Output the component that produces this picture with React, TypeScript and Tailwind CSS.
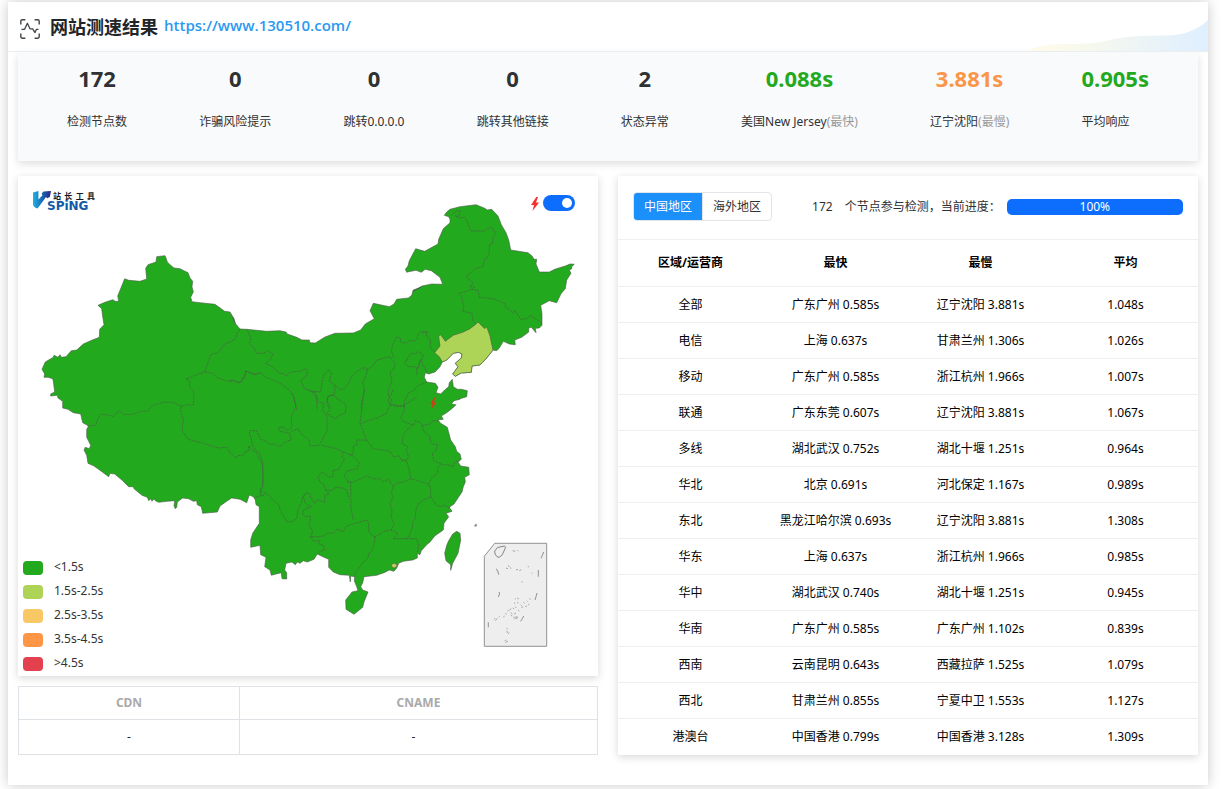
import React, { useState } from "react";

type Stat = { value: string; label: string; note?: string; color: string };

const stats: Stat[] = [
  { value: "172", label: "检测节点数", color: "text-[#303133]" },
  { value: "0", label: "诈骗风险提示", color: "text-[#303133]" },
  { value: "0", label: "跳转0.0.0.0", color: "text-[#303133]" },
  { value: "0", label: "跳转其他链接", color: "text-[#303133]" },
  { value: "2", label: "状态异常", color: "text-[#303133]" },
  { value: "0.088s", label: "美国New Jersey", note: "(最快)", color: "text-[#23a91d]" },
  { value: "3.881s", label: "辽宁沈阳", note: "(最慢)", color: "text-[#fb9547]" },
  { value: "0.905s", label: "平均响应", color: "text-[#23a91d]" },
];

const rows = [
  ["全部", "广东广州 0.585s", "辽宁沈阳 3.881s", "1.048s"],
  ["电信", "上海 0.637s", "甘肃兰州 1.306s", "1.026s"],
  ["移动", "广东广州 0.585s", "浙江杭州 1.966s", "1.007s"],
  ["联通", "广东东莞 0.607s", "辽宁沈阳 3.881s", "1.067s"],
  ["多线", "湖北武汉 0.752s", "湖北十堰 1.251s", "0.964s"],
  ["华北", "北京 0.691s", "河北保定 1.167s", "0.989s"],
  ["东北", "黑龙江哈尔滨 0.693s", "辽宁沈阳 3.881s", "1.308s"],
  ["华东", "上海 0.637s", "浙江杭州 1.966s", "0.985s"],
  ["华中", "湖北武汉 0.740s", "湖北十堰 1.251s", "0.945s"],
  ["华南", "广东广州 0.585s", "广东广州 1.102s", "0.839s"],
  ["西南", "云南昆明 0.643s", "西藏拉萨 1.525s", "1.079s"],
  ["西北", "甘肃兰州 0.855s", "宁夏中卫 1.553s", "1.127s"],
  ["港澳台", "中国香港 0.799s", "中国香港 3.128s", "1.309s"],
];

const legend = [
  { color: "bg-[#23a91d]", text: "<1.5s" },
  { color: "bg-[#aed457]", text: "1.5s-2.5s" },
  { color: "bg-[#f9c866]", text: "2.5s-3.5s" },
  { color: "bg-[#fe9645]", text: "3.5s-4.5s" },
  { color: "bg-[#e2414d]", text: ">4.5s" },
];

/* Each map tile has its own origin and is drawn at three units per map unit. */
function tile(ox: number, oy: number, pts: string): string {
  return pts
    .split(" ")
    .map((p) => {
      const [x, y] = p.split(",").map(Number);
      return `${(ox + x / 3).toFixed(1)},${(oy + y / 3).toFixed(1)}`;
    })
    .join(" ");
}
const nw = (p: string) => tile(30, 240, p);
const north = (p: string) => tile(230, 190, p);
const ne = (p: string) => tile(390, 190, p);
const sw = (p: string) => tile(60, 390, p);
const se = (p: string) => tile(230, 390, p);
const sea = (p: string) => tile(460, 510, p);

const outline = [
  nw("36,388 46,366 70,352 72,346 84,352 90,344 94,352 108,350 124,332 140,330 160,312 185,301 208,292 209,268 222,254 218,230 215,206 204,196 225,187 248,179 256,184 266,184 263,168 284,116 296,121 330,124 350,117 347,85 354,74 378,66 380,50 405,47 408,54 412,66 420,74 432,84 450,86 462,92 474,98 480,114 488,124 486,140 490,156 482,172 486,185 510,188 555,193 584,214 600,216 612,236 616,250"),
  north("8,382 14,398 30,417 50,418 110,424 150,422 168,426 172,432 200,442 216,450 238,450 240,458 256,459 285,441 315,430 370,429 392,420 406,402 433,386 420,362 430,340 478,350 492,342 500,328 535,324 545,316 550,300 574,292"),
  ne("68,304 96,288 125,282 158,283 150,262 124,242 106,238 94,247 78,241 56,245 50,247 46,238 54,228 58,212 77,176 104,184 126,172 144,162 146,148 160,116 180,98 180,88 176,80 163,76 170,66 180,58 210,50 258,44 284,55 292,60 305,58 324,78 334,104 348,128 356,150 362,180 400,186 414,188 426,198 432,208 440,208 438,222 448,246 478,246 494,238 526,228 540,222 553,223 545,230 545,236 538,240 543,250 530,270 526,296 514,310 500,338 478,332 452,346 456,372 456,406 448,414 436,415 438,428 424,412 416,414 416,426 395,442 374,450 376,464 358,462 340,454 328,474 320,482 309,480 290,504 270,525 246,528 244,547 214,549 196,559 188,552 204,530 196,520 214,504 216,492 206,487 190,490 170,510 157,516 150,530 135,546 116,552 106,548 103,562 110,576 136,580 144,592 138,608 152,612 164,600 176,590 178,578 187,568 190,590 202,598 214,598 232,602 230,620 210,626"),
  se("690,28 672,32 664,42 678,44 668,54 650,68 634,78 640,88 624,90 632,100 652,112 662,150 676,170 680,184 690,192 694,208 684,216 692,228 716,232 718,254 704,262 706,276 700,290 696,306 688,318 672,342 658,352 666,364 648,370 656,380 642,400 640,420 614,438 600,456 590,464 574,482 570,494 562,490 562,504 548,510 520,514 506,520 500,534 492,544 478,540 462,548 440,556 402,560 398,578 392,590 398,600 414,606 402,636 398,652 372,673 348,658 347,630 366,606 384,602 380,590 373,572 374,560 362,558 361,576 358,556 330,554 310,546 296,532 296,508 282,502 262,492 252,508 232,516 220,512 210,520 202,516 196,524 186,516 168,520 164,540 170,548 170,567 156,566 154,548 138,552 124,556 120,540 104,530 108,502 92,494 90,466 62,472 62,450 68,430 88,400 88,350 78,344 76,330 70,320"),
  sw("568,315 560,338 540,328 515,324 500,334 480,348 472,366 428,370 424,350 412,344 410,332 400,334 386,326 368,324 352,336 350,352 346,356 342,348 344,332 322,334 296,337 286,332 282,326 276,334 272,326 266,332 262,322 246,316 222,296 220,290 206,290 188,272 164,252 150,250 146,260 124,244 102,228 84,220 80,196 72,180 76,172 88,176 92,166 80,142 80,118 86,108 68,98 62,72"),
  nw("130,518 114,508 98,504 98,484 84,474 82,466 62,468 62,462 74,456 70,424 68,416 54,412 42,412 44,402"),
].join(" ");

const liaoning = ne("256,404 264,396 276,408 284,416 290,410 300,438 309,480 290,504 270,525 246,528 244,547 214,549 196,559 188,552 204,530 196,520 214,504 216,492 206,487 190,490 170,510 157,516 148,500 134,488 150,468 146,440 152,434 166,454 190,436 220,426 240,416");
const taiwan = se("690,430 680,424 668,432 656,452 650,466 644,490 648,512 662,524 662,541 668,520 684,490 692,450");

const borders = [
  nw("629,268 618,285 620,292 604,304 584,312 564,338 542,344 524,396 500,404 468,417 480,425 478,440 492,456 490,496 472,494 462,498 452,498"),
  nw("172,558 196,556 206,532 214,522 250,529 268,513 284,524 310,523 334,513 352,514 366,497 400,487 428,487 452,498"),
  sw("364,50 362,64 370,90 366,120 384,148 430,160 460,170 480,174 500,172 512,190 528,204 534,196 550,198 552,188 564,184 570,165"),
  sw("564,170 590,190 600,212 606,215 610,250 608,290 600,305 606,316 586,322"),
  north("50,418 64,445 58,460 72,474 80,490 100,490 114,482 128,492 122,508 106,520 130,532 148,550 158,550 168,558 180,546 210,544 226,536 234,546 228,560 212,570 222,594 244,604 258,620 262,660"),
  nw("524,396 548,400 560,412 572,416 590,424 608,420 630,428 636,416 644,412 648,392 662,400 676,404 690,400"),
  north("0,574 12,572 24,580 38,572 48,544 74,552 92,548 108,562 124,568 150,580 178,600 192,622 200,660"),
  se("188,10 198,50 184,80 186,110 174,122 162,112 146,112 150,124 180,130 184,150 170,154 150,170 134,162 120,164 106,152 92,148 80,122 60,122 58,130 64,146 66,165"),
  north("244,604 272,606 276,576 282,554 296,538 304,550 298,575 316,586 312,614 294,618 292,634 304,656"),
  se("235,0 258,10 264,36 282,40 278,60 290,78 292,120 276,152 268,166 240,168 236,150 214,132 204,116 184,124"),
  se("290,40 294,20 308,15 348,45 346,70 330,74 316,86 302,78 290,70 300,60 290,40"),
  north("316,586 330,598 340,598 356,580 362,564 380,544 398,534 410,534 412,545 398,580 404,600 394,640 395,660"),
  se("402,0 396,50 390,100 410,150 380,150 382,164 370,168 370,190 360,198"),
  north("410,540 428,528 440,510 480,500 496,520 490,540 480,545 486,575 474,600 476,620 486,630 480,640"),
  se("490,0 474,30 480,44 470,70 440,84 410,94 394,100"),
  north("492,502 484,484 488,464 500,440 510,444 514,458 530,458 540,450 552,454 562,446 564,434 572,424 596,428"),
  ne("96,430 108,425 110,440 122,450 120,470 134,488"),
  ne("50,510 62,490 76,492 84,484 100,496 94,510 98,524 112,548"),
  ne("50,510 44,520 56,530 72,530 82,536 92,508 86,530 80,540 80,556"),
  ne("110,576 80,590 74,600 56,608 44,632 42,650 0,642"),
  ne("184,76 200,62 212,64 206,78 196,78 210,84 222,82 230,90 242,122 280,124 304,110 318,132 308,142 308,160 298,164 298,190 290,206 284,208 280,228 256,236 228,260 250,280 240,290 254,290 244,300"),
  ne("244,298 264,300 268,322 310,326 324,332 348,342 344,350 358,358 370,370 374,360 392,388 412,386 420,376 452,396"),
  ne("244,298 230,304 206,310 214,318 222,350 218,364 246,370 248,390 256,400"),
  se("480,44 504,50 522,46 540,34 560,20"),
  se("522,46 524,60 512,84 520,94 550,106 556,92 568,96 576,106 600,102 608,92 624,92"),
  se("410,150 430,176 480,184 490,200 508,198 514,210 530,210 536,200 528,180 534,170 516,160 520,136 530,120 550,106"),
  se("576,106 582,124 600,140 602,156 610,162 622,164 618,182 606,190 612,214 640,224 664,226 668,232 674,216 690,212"),
  se("632,224 622,236 622,250 606,262 596,280 602,300 602,320"),
  se("514,210 530,214 538,240 542,266"),
  se("350,276 372,276 400,262 410,258 430,266 450,266 460,276 476,268 490,290 500,280 520,276 542,266 570,274 590,280 600,290"),
  se("276,166 300,172 320,176 340,186 368,196 388,218 382,236 350,244 342,258 362,280 362,320"),
  se("340,186 336,200 344,206 326,238 308,242 310,260 300,262 276,246 264,262 270,276 282,284 286,300"),
  se("286,300 304,302 318,292 338,294 350,300 354,318 364,330 362,350 370,390"),
  se("286,300 298,312 284,316 284,336 262,330 254,340 242,324 240,312 230,308 220,320 226,340 244,350 220,360 218,374 226,380 240,378 242,390 236,400 248,426 240,440 260,440 282,438 290,430 312,428 320,418 340,424 350,408 370,402 410,390 416,400 416,424 428,438 436,440"),
  se("90,310 100,318 106,306 120,320 134,334 148,346 150,360 170,394 186,396 200,386 204,360 214,338 218,320 230,308"),
  se("490,290 484,310 490,320 480,340 486,360 484,380 492,400 484,420"),
  se("436,440 462,424 484,420 504,430 490,446 526,446 560,446 566,466 562,490"),
  se("602,320 580,330 566,340 558,360 556,384 546,400 548,410 536,440 526,446"),
  se("602,320 620,346 634,350 640,346 660,354"),
  se("436,440 430,470 424,484 416,490 414,504 400,516 390,530 376,548 374,560"),
  se("244,440 250,454 268,452 266,462 280,465 284,480 270,484 262,492"),
  se("66,165 80,184 90,190 98,220 98,290 88,300 100,306"),
];

const islets = [
  "158,122 166,124", "172,121 175,123", "138,174 144,176", "146,166 147,171", "150,173 154,175", "168,180 174,178",
  "178,182 184,179", "184,215 188,217", "204,168 206,172", "214,188 217,191", "165,268 168,266", "172,264 177,267",
  "162,278 166,281", "172,276 175,280", "182,284 185,287", "190,276 194,280", "184,292 189,291", "200,272 203,275",
  "208,266 212,268", "196,290 201,288", "148,300 154,296", "158,294 162,297", "166,290 169,294", "174,300 178,303",
  "142,304 146,301", "136,310 140,313", "152,308 157,311", "162,312 168,309", "130,321 134,318", "116,322 119,319",
  "102,328 106,324", "106,332 112,325", "160,324 166,320", "164,328 172,318", "168,326 174,322", "152,316 157,318",
  "139,354 143,357", "141,362 142,369", "144,371 148,368", "134,392 139,390", "136,398 144,393", "204,285 208,282",
];

const seaMarks = [
  "109,176 114,186 116,194", "251,126 247,136 243,145", "235,180 235,200", "118,246 118,254 115,261",
  "231,249 228,260 225,270", "191,318 187,326 182,334", "85,337 85,352",
];

function ScanIcon() {
  return (
    <svg aria-hidden="true" viewBox="0 0 20 20" className="mt-1 h-5 w-5 shrink-0" fill="none" stroke="#40454a" strokeWidth="1.4">
      <path d="M.8 5.4V2.2Q.8.8 2.2.8h3.2M14.6.8h3.2q1.4 0 1.4 1.4v3.2M19.2 14.6v3.2q0 1.4-1.4 1.4h-3.2M5.4 19.2H2.2q-1.4 0-1.4-1.4v-3.2" />
      <path d="M1.500 10.300H4.600L7.400 4.300 10 9.800H12.700L15 13.600 16.500 10.300H18.500" strokeWidth="1.3" strokeLinejoin="round" />
    </svg>
  );
}

function Logo() {
  return (
    <div className="flex items-start font-bold">
      <svg aria-hidden="true" viewBox="0 0 18 18" className="h-[18px] w-[18px]">
        <defs>
          <linearGradient id="mark" x1="0" y1="0" x2="1" y2="0">
            <stop offset="0" stopColor="#1fb3e2" />
            <stop offset=".55" stopColor="#1763b4" />
            <stop offset="1" stopColor="#2d2183" />
          </linearGradient>
        </defs>
        <path d="M0 1.500 5.400 0V8.500L9.500 4.200 8.600 2.400 10.500.6 18 0 16.800 6 14.200 7.200 13 6 4.500 17.400Q0 16.300 0 13Z" fill="url(#mark)" />
      </svg>
      <div className="-ml-1 flex w-12 flex-col">
        <span className="flex justify-between pl-1.5 text-[8px] leading-[9px] text-[#16191d]">
          <span>站</span>
          <span>长</span>
          <span>工</span>
          <span>具</span>
        </span>
        <span className="font-['DejaVu_Sans'] text-xs leading-3 text-[#1359a8]">SPiNG</span>
      </div>
    </div>
  );
}

function ChinaMap() {
  return (
    <svg viewBox="18 176 580 500" className="block w-full" role="img" aria-label="中国地区测速地图">
      <g strokeLinejoin="round" strokeWidth=".6" stroke="#4a5a48">
        <polygon points={outline} fill="#23a91d" />
        <polygon points={taiwan} fill="#23a91d" />
        <polygon points={liaoning} fill="#aed457" />
        <g fill="none" stroke="#4d574c" strokeDasharray="2.4 .8">
          {borders.map((b, i) => (
            <polyline key={i} points={b} />
          ))}
        </g>
        <polygon points={se("484,525 490,520 500,522 501,528 494,534 486,532")} fill="#c3c95c" />
        <polygon points={se("733,408 737,403 740,403 739,409")} fill="#888" stroke="#888" />
      </g>
      <path d="M434.4 397.5 430.4 403.4h2.200l-.9 5.400 4.800-6.600h-2.600l1.300-4.700Z" fill="#e8301c" />
      <polygon points={sea("73,139 104,100 260,100 260,409 73,409")} fill="#eee" stroke="#909090" />
      <path d="M495 554q-1.700-3 2.500-6.500l7-1.500q2 .5 0 4-2 6-5.500 7.500-2.500-.5-4-3.500Z" fill="none" stroke="#777" strokeWidth=".9" />
      <g fill="none" stroke="#777" strokeWidth=".8">
        {seaMarks.map((m, i) => (
          <polyline key={i} points={sea(m)} />
        ))}
        {islets.map((m, i) => (
          <polyline key={i} points={sea(m)} strokeWidth=".6" />
        ))}
      </g>
    </svg>
  );
}

export default function App() {
  const [region, setRegion] = useState("china");
  const [live, setLive] = useState(true);

  return (
    <div className="px-2 pt-0.5 pb-1 font-['Noto_Sans','Noto_Sans_CJK_SC',sans-serif] sm:pr-3.5">
      <main className="bg-white pb-[30px] shadow-[0_0_12px_rgba(0,0,0,0.22)]">
        <header className="relative flex h-[50px] items-center gap-2.5 border-b border-[#ebeef0] px-3">
          <svg aria-hidden="true" viewBox="0 0 190 32" className="absolute right-0 bottom-0 h-8 w-[190px]">
            <defs>
              <linearGradient id="wave" x1="0" y1="0" x2="1" y2="0">
                <stop offset="0" stopColor="#fffbea" />
                <stop offset=".3" stopColor="#f8f9ec" />
                <stop offset=".65" stopColor="#ebf4f6" />
                <stop offset="1" stopColor="#dfefff" />
              </linearGradient>
            </defs>
            <path d="M8 32Q24 25 42 25C64 25 76 25 92 21 120 14 148 19 168 14Q182 9 190 1V32Z" fill="url(#wave)" />
          </svg>
          <ScanIcon />
          <div className="relative flex items-center gap-1.5">
            <h1 className="text-lg leading-[26px] font-bold text-[#212529]">网站测速结果</h1>
            <a
              href="https://www.130510.com/"
              className="mb-1 font-['Open_Sans'] text-[15px] leading-[22px] font-semibold text-[#2b99f0]"
            >
              https://www.130510.com/
            </a>
          </div>
        </header>

        <div className="px-2.5">
          <section className="flex h-[109px] justify-between bg-[#f8fafc] px-[49px] pt-[11px] shadow-[0_3px_8px_rgba(0,0,0,0.13)]">
            {stats.map((s, i) => (
              <div key={s.label} className={i === stats.length - 1 ? "flex flex-col items-start" : "flex flex-col items-center"}>
                <strong className={`text-[22px] leading-[30px] font-bold ${s.color}`}>{s.value}</strong>
                <span className="mt-[19px] text-xs leading-5 whitespace-nowrap text-[#303133]">
                  {s.label}
                  {s.note && <span className="text-[#999]">{s.note}</span>}
                </span>
              </div>
            ))}
          </section>

          <div className="mt-[15px] grid grid-cols-2 gap-5">
            <div className="flex flex-col gap-2.5">
              <section className="relative bg-white shadow-[0_2px_8px_rgba(0,0,0,0.16)]">
                <ChinaMap />
                <div className="absolute top-[15px] left-[15px]">
                  <Logo />
                </div>
                <label className="absolute top-[19px] right-[23px] flex items-center gap-1">
                  <svg aria-hidden="true" viewBox="0 0 8 14" className="mt-0.5 h-3.5 w-2">
                    <path d="M5.300 0 0 8h3L1.500 14 8 5.400H5L7 0Z" fill="#f5312d" />
                  </svg>
                  <input
                    type="checkbox"
                    role="switch"
                    aria-label="实时测速"
                    checked={live}
                    onChange={(e) => setLive(e.target.checked)}
                    className="h-4 w-8 cursor-pointer appearance-none rounded-full bg-[#bfbfbf] before:ml-[3px] before:mt-[3px] before:block before:h-2.5 before:w-2.5 before:rounded-full before:bg-white checked:bg-[#0d6efd] checked:before:ml-[19px]"
                  />
                </label>
                <ul className="absolute bottom-px left-[5px] text-xs leading-6 text-[#333]">
                  {legend.map((l) => (
                    <li key={l.text} className="flex h-6 items-center gap-[11px]">
                      <span className={`mt-0.5 h-3.5 w-5 rounded ${l.color}`} />
                      <span>{l.text}</span>
                    </li>
                  ))}
                </ul>
              </section>

              <table className="w-full table-fixed border-collapse text-center text-xs">
                <thead>
                  <tr className="h-[33px] text-[#aaa]">
                    <th scope="col" className="w-[221px] border border-[#dee2e6] font-bold">CDN</th>
                    <th scope="col" className="border border-[#dee2e6] font-bold">CNAME</th>
                  </tr>
                </thead>
                <tbody>
                  <tr className="h-[35px] text-[#212529]">
                    <td className="border border-[#dee2e6]">-</td>
                    <td className="border border-[#dee2e6] pr-2.5">-</td>
                  </tr>
                </tbody>
              </table>
            </div>

            <section className="bg-white shadow-[0_2px_8px_rgba(0,0,0,0.16)]">
              <div className="flex h-[63px] items-center gap-10 px-[15px] pb-0.5 text-xs leading-5 text-[#303133]">
                <div className="flex h-[29px] shrink-0 rounded border border-[#e2e5ea]">
                  <button
                    type="button"
                    onClick={() => setRegion("china")}
                    className={region === "china" ? "rounded-l-[3px] bg-[#1b8ffa] px-2.5 text-white" : "px-2.5"}
                  >
                    中国地区
                  </button>
                  <button
                    type="button"
                    onClick={() => setRegion("overseas")}
                    className={
                      region === "overseas"
                        ? "rounded-r-[3px] border-l border-[#e2e5ea] bg-[#1b8ffa] px-2.5 text-white"
                        : "border-l border-[#e2e5ea] px-2.5"
                    }
                  >
                    海外地区
                  </button>
                </div>
                <div className="flex min-w-0 flex-1 items-center gap-1.5">
                  <p className="flex gap-3 whitespace-nowrap">
                    <span>172</span>
                    <span>个节点参与检测，当前进度：</span>
                  </p>
                  <div
                    role="progressbar"
                    aria-label="当前进度"
                    aria-valuenow={100}
                    className="h-4 flex-1 rounded-[5px] bg-[#0d6efd] text-center leading-4 text-white"
                  >
                    100%
                  </div>
                </div>
              </div>
              <table className="w-full table-fixed border-collapse text-center text-xs leading-5 text-black">
                <thead>
                  <tr className="h-[47px] border-y border-[#edf0f2]">
                    {["区域/运营商", "最快", "最慢", "平均"].map((h) => (
                      <th key={h} scope="col" className="font-bold">{h}</th>
                    ))}
                  </tr>
                </thead>
                <tbody>
                  {rows.map((r) => (
                    <tr key={r[0]} className="h-9 border-b border-[#edf0f2] last:border-b-0">
                      {r.map((c, i) => (
                        <td key={i} className="whitespace-nowrap">{c}</td>
                      ))}
                    </tr>
                  ))}
                </tbody>
              </table>
            </section>
          </div>
        </div>
      </main>
    </div>
  );
}
